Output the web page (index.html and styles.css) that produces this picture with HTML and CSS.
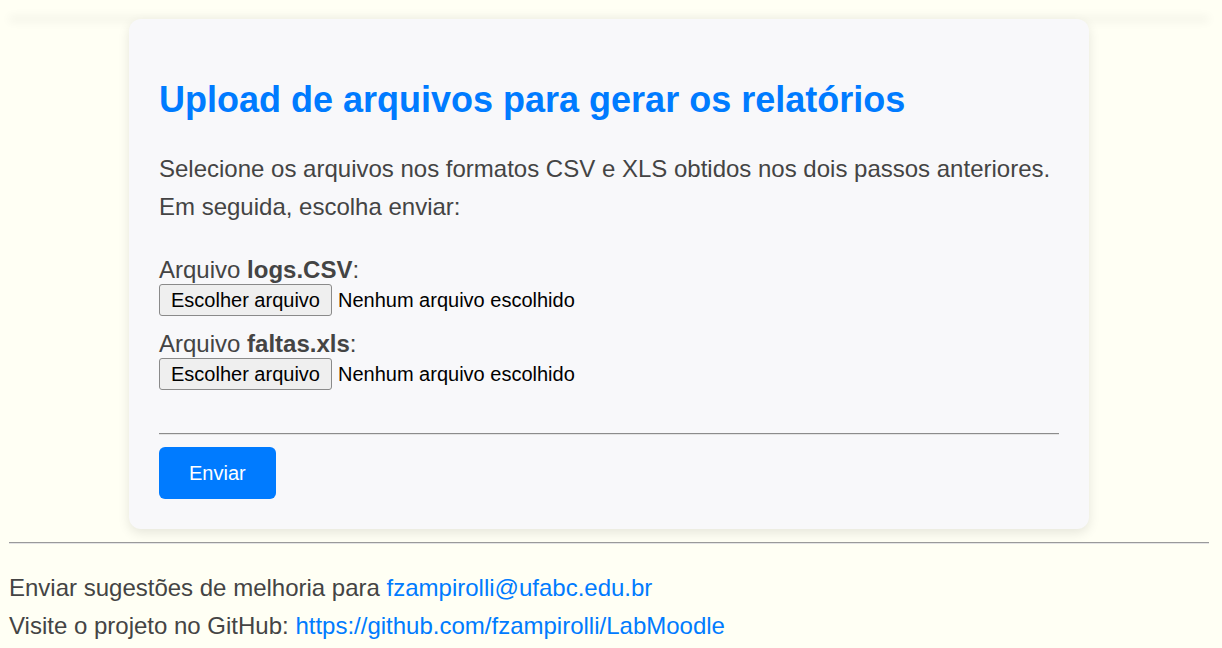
FILE: index.html
```html
<!DOCTYPE html>
<html lang="pt-BR">
<head>
<meta charset="utf-8">
<title>Upload de arquivos</title>
<link rel="stylesheet" href="styles.css">
</head>
<body>
<div class="page">
  <div class="topbar"></div>
  <section class="card">
    <h1 class="card-title">Upload de arquivos para gerar os relatórios</h1>
    <p class="intro">Selecione os arquivos nos formatos CSV e XLS obtidos nos dois passos anteriores. Em seguida, escolha enviar:</p>
    <form class="upload-form">
      <div class="field">
        <div class="field-label">Arquivo <b>logs.CSV</b>:</div>
        <label class="file">
          <input type="file" class="file-input">
          <span class="file-btn">Escolher arquivo</span>
          <span class="file-name">Nenhum arquivo escolhido</span>
        </label>
      </div>
      <div class="field">
        <div class="field-label">Arquivo <b>faltas.xls</b>:</div>
        <label class="file">
          <input type="file" class="file-input">
          <span class="file-btn">Escolher arquivo</span>
          <span class="file-name">Nenhum arquivo escolhido</span>
        </label>
      </div>
      <hr class="rule">
      <button type="button" class="submit">Enviar</button>
    </form>
  </section>
  <hr class="rule footer-rule">
  <footer class="footer">
    <div class="footer-line">Enviar sugestões de melhoria para <a href="#" class="link">fzampirolli@ufabc.edu.br</a></div>
    <div class="footer-line">Visite o projeto no GitHub: <a href="#" class="link">https://github.com/fzampirolli/LabMoodle</a></div>
  </footer>
</div>
</body>
</html>
```

FILE: styles.css
```css
html, body {
  margin: 0;
  padding: 0;
  background: #fffff4;
}
body {
  font-family: "Liberation Sans", Arial, Helvetica, sans-serif;
  color: #444;
  font-size: 24px;
  overflow: hidden;
}
.page {
  width: 1200px;
  margin-left: 9px;
}
.topbar {
  height: 0;
  margin: 0 2px;
  box-shadow: 0 0 10px 2px rgba(0, 0, 0, 0.08);
}
.card {
  width: 960px;
  box-sizing: border-box;
  margin: 19px auto 0;
  padding: 30px 30px 30px;
  background: #f8f8fa;
  border-radius: 12px;
  box-shadow: 0 4px 12px rgba(0, 0, 0, 0.1);
}
.card-title {
  margin: 30px 0 30px;
  font-size: 36px;
  line-height: 41px;
  font-weight: bold;
  color: #007bff;
}
.intro {
  margin: 0;
  line-height: 38.4px;
}
.upload-form {
  margin-top: 29px;
}
.field {
  margin-bottom: 14px;
}
.field-label {
  line-height: 28px;
}
.field-label b {
  font-weight: bold;
}
.file {
  display: flex;
  align-items: center;
  gap: 6px;
  color: #000;
  font-size: 20px;
}
.file-input {
  display: none;
}
.file-btn {
  display: inline-block;
  padding: 3px 11px;
  line-height: 24px;
  border: 1px solid #8a8a8a;
  border-radius: 3px;
  background: #efefef;
  color: #000;
}
.file-name {
  line-height: 24px;
}
.rule {
  height: 0;
  margin: 43px 0 12px;
  border: 0;
  border-top: 1px solid #8c8c8c;
  border-bottom: 1px solid #e4e4e4;
}
.submit {
  display: block;
  padding: 14px 30px;
  border: 0;
  border-radius: 6px;
  background: #007bff;
  color: #fff;
  font-family: inherit;
  font-size: 20px;
  line-height: 24px;
}
.footer-rule {
  margin: 13px 0 0;
  border-top-color: #9a9a9a;
}
.footer {
  padding-top: 25px;
}
.footer-line {
  line-height: 38px;
}
.link {
  color: #007bff;
  text-decoration: none;
}
```
